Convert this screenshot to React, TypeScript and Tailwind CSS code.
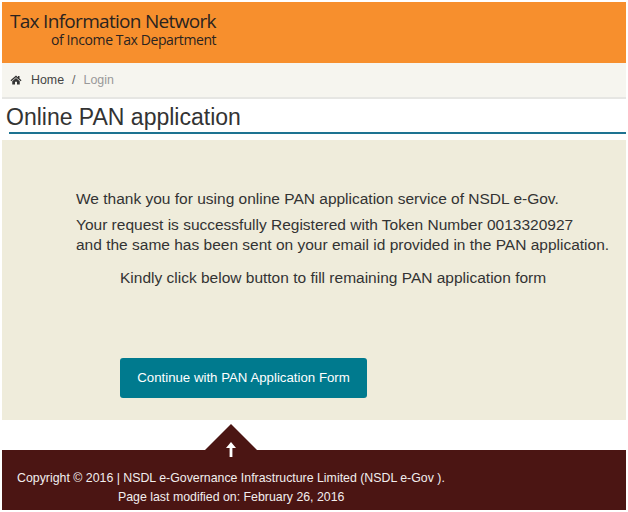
import React from 'react';

const App: React.FC = () => {
  return (
    <div className="w-[628px] h-[512px] bg-white px-[2px] pt-[2px] overflow-hidden font-['Liberation_Sans',Arial,sans-serif]">
      <header className="h-[61px] bg-[#f78f2d] pl-[8px] pt-[8px] font-['Open_Sans',sans-serif] text-[#2a2320]">
        <div className="text-[19px] leading-[22px] tracking-[-0.7px]">Tax Information Network</div>
        <div className="text-[14px] leading-[16px] pl-[41px] tracking-[-0.4px]">of Income Tax Department</div>
      </header>

      <nav className="h-[36px] bg-[#f6f5ef] border-b-[2px] border-[#e6e6e3] flex items-center pl-[8px] text-[12.4px]">
        <svg viewBox="0 0 24 24" className="w-[12px] h-[12px] fill-[#333333]">
          <path d="M12 3 L1 12.5 L2.6 14.4 L12 6.3 L21.4 14.4 L23 12.5 L19 9 V4 H16 V6.4 Z" />
          <path d="M12 8.2 L4.5 14.6 V21 H10 V15.5 H14 V21 H19.5 V14.6 Z" />
        </svg>
        <span className="ml-[9px] text-[#444444]">Home</span>
        <span className="ml-[8px] text-[#666666]">/</span>
        <span className="ml-[8px] text-[#999999]">Login</span>
      </nav>

      <div className="h-[33px] pl-[4px] text-[#333333] text-[23px] leading-[36px]">
        Online PAN application
      </div>
      <div className="ml-[7px] h-[2px] bg-[#1d7391]" />

      <main className="mt-[6px] h-[280px] bg-[#efecdb] text-[#333333] text-[15.5px] pl-[74px] pt-[49px]">
        <p className="leading-[20px]">We thank you for using online PAN application service of NSDL e-Gov.</p>
        <p className="leading-[20px] mt-[6px]">Your request is successfully Registered with Token Number 0013320927</p>
        <p className="leading-[20px]">and the same has been sent on your email id provided in the PAN application.</p>
        <p className="leading-[20px] mt-[13px] pl-[44px]">Kindly click below button to fill remaining PAN application form</p>
        <button className="mt-[70px] ml-[44px] h-[40px] w-[247px] rounded-[3px] bg-[#007a8e] text-white text-[13.25px]">
          Continue with PAN Application Form
        </button>
      </main>

      <footer className="relative mt-[30px] h-[60px] bg-[#4b1513] text-[#f2eeee] text-[12.35px]">
        <svg viewBox="0 0 52 26" className="absolute left-[203px] -top-[26px] w-[52px] h-[26px] fill-[#4b1513]">
          <path d="M26 0 L52 26 H0 Z" />
        </svg>
        <svg viewBox="0 0 10 15" className="absolute left-[224px] -top-[8px] w-[10px] h-[15px] fill-white">
          <path d="M5 0 L10 6 H6.4 V15 H3.6 V6 H0 Z" />
        </svg>
        <div className="pl-[15px] pt-[19px] leading-[19px]">Copyright © 2016 | NSDL e-Governance Infrastructure Limited (NSDL e-Gov ).</div>
        <div className="pl-[116px] leading-[19px]">Page last modified on: February 26, 2016</div>
      </footer>
    </div>
  );
};

export default App;
